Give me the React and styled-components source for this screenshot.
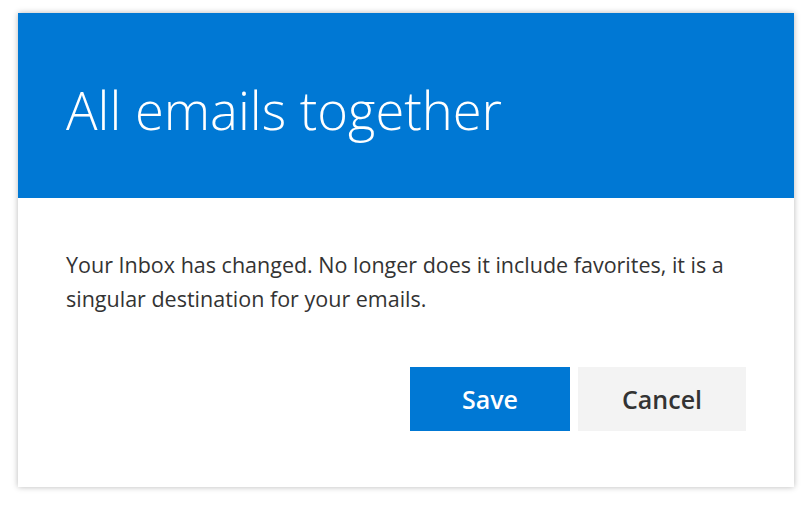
import styled, { createGlobalStyle } from "styled-components";

const GlobalStyle = createGlobalStyle`
    body{
        margin:0;
        background:#fff;
        font-family:"Open Sans", "Noto Sans", sans-serif;
    }
`;

const Page = styled.div`
    width:812px;
    height:508px;
    padding:13px 18px 0;
    box-sizing:border-box;
`;
const Dialog = styled.div`
    width:776px;
    height:474px;
    background:#fff;
    box-shadow:0 0 6px rgba(0,0,0,0.28);
    display:flex;
    flex-direction:column;
`;
const Header = styled.div`
    height:185px;
    background:#0078d4;
    padding:0 48px;
    box-sizing:border-box;
    display:flex;
    align-items:flex-start;
`;
const Title = styled.h1`
    margin:65px 0 0;
    color:#fff;
    font-size:52.5px;
    font-weight:300;
    line-height:64px;
`;
const Body = styled.div`
    flex:1;
    padding:50px 48px 0;
    box-sizing:border-box;
`;
const Text = styled.p`
    margin:0;
    color:#333;
    font-size:21.5px;
    line-height:34px;
`;
const Actions = styled.div`
    display:flex;
    justify-content:flex-end;
    gap:8px;
    margin-top:51px;
`;
const Button = styled.button`
    height:64px;
    width:${p => p.$w}px;
    border:none;
    padding:0;
    font-family:inherit;
    font-size:25px;
    font-weight:600;
    background:${p => p.$primary ? "#0078d4" : "#f3f3f3"};
    color:${p => p.$primary ? "#fff" : "#333"};
    cursor:pointer;
`;

export default function App() {
    return (
        <>
            <GlobalStyle />
            <Page>
                <Dialog>
                    <Header>
                        <Title>All emails together</Title>
                    </Header>
                    <Body>
                        <Text>
                            Your Inbox has changed. No longer does it include favorites, it is a singular destination for your emails.
                        </Text>
                        <Actions>
                            <Button $primary $w={160}>Save</Button>
                            <Button $w={168}>Cancel</Button>
                        </Actions>
                    </Body>
                </Dialog>
            </Page>
        </>
    );
}
